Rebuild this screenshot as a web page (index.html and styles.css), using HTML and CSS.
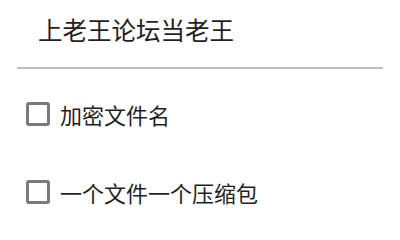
FILE: index.html
```html
<!DOCTYPE html>
<html lang="zh-CN">
<head>
<meta charset="utf-8">
<link rel="stylesheet" href="styles.css">
</head>
<body>
  <div class="title">上老王论坛当老王</div>
  <div class="divider"></div>
  <div class="options">
    <label class="row"><span class="box"></span><span class="label">加密文件名</span></label>
    <label class="row"><span class="box"></span><span class="label">一个文件一个压缩包</span></label>
  </div>
</body>
</html>
```
FILE: styles.css
```css
html, body {
  margin: 0;
  padding: 0;
  background: #ffffff;
}
body {
  width: 400px;
  height: 230px;
  overflow: hidden;
  font-family: "Noto Sans CJK SC", "Noto Sans", sans-serif;
  color: #1f1f1f;
}
.title {
  font-size: 24.5px;
  line-height: 32px;
  padding: 14px 0 0 38px;
}
.divider {
  height: 2px;
  background: #bdbdbd;
  margin: 21px 17px 0 17px;
}
.options {
  display: flex;
  flex-direction: column;
  gap: 38px;
  margin-top: 25px;
}
.row {
  display: flex;
  align-items: center;
  height: 40px;
  padding-left: 26px;
}
.box {
  box-sizing: border-box;
  width: 24px;
  height: 24px;
  border: 3px solid #7a7a7a;
  border-radius: 3px;
  flex: none;
}
.label {
  font-size: 22px;
  line-height: 30px;
  margin-left: 10px;
}
```
